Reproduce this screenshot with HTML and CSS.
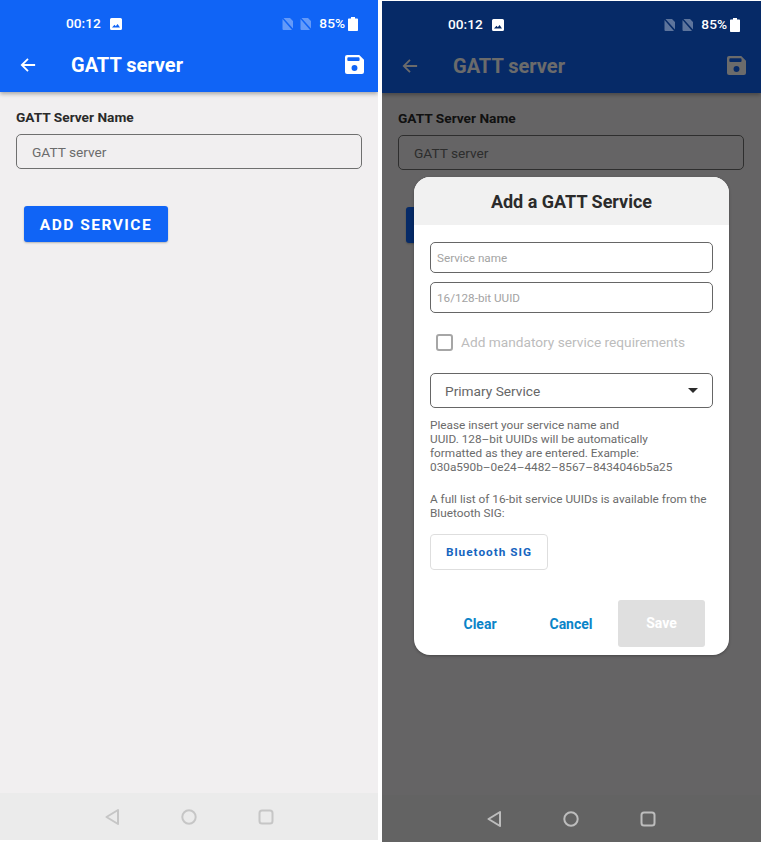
FILE: index.html
```html
<!DOCTYPE html>
<html lang="en">
<head>
<meta charset="utf-8">
<title>GATT server</title>
<link rel="stylesheet" href="styles.css">
</head>
<body>
<svg class="defs" width="0" height="0" aria-hidden="true">
  <symbol id="i-image" viewBox="0 0 12 12"><path fill-rule="evenodd" d="M1.5 0h9A1.5 1.5 0 0 1 12 1.5v9a1.5 1.5 0 0 1-1.500 1.500h-9A1.500 1.500 0 0 1 0 10.500v-9A1.500 1.500 0 0 1 1.500 0zM2 9.500h8L7.600 6 5.800 8.300 4.500 6.800z" fill="currentColor"/></symbol>
  <symbol id="i-sim" viewBox="0 0 12 12"><path d="M1.500 0h6.500L11 3v7.500zM.500 1v10a1 1 0 0 0 1 1h8.500z" fill="currentColor"/></symbol>
  <symbol id="i-batt" viewBox="0 0 10 14"><path d="M3 0h4v1.500h2.200a.8.8 0 0 1 .8.800v10.900a.8.8 0 0 1-.8.800H.8a.8.8 0 0 1-.8-.8V2.300a.8.8 0 0 1 .8-.8H3z" fill="currentColor"/></symbol>
  <symbol id="i-back" viewBox="0 0 18 18"><path d="M17 9H2.500M9 2 2 9l7 7" fill="none" stroke="currentColor" stroke-width="2"/></symbol>
  <symbol id="i-save" viewBox="0 0 18 18"><path fill-rule="evenodd" d="M2 0h11.500L18 4.500V16a2 2 0 0 1-2 2H2a2 2 0 0 1-2-2V2a2 2 0 0 1 2-2zm1.200 2.200a1 1 0 0 0-1 1v1.600a1 1 0 0 0 1 1h9.600a1 1 0 0 0 1-1V3.200a1 1 0 0 0-1-1zM9 9.500a2.800 2.800 0 1 0 0 5.600 2.800 2.800 0 0 0 0-5.600z" fill="currentColor"/></symbol>
  <symbol id="i-nav-back" viewBox="0 0 16 18"><path d="M14 2 2.500 9 14 16z" fill="none" stroke="currentColor" stroke-width="2" stroke-linejoin="round"/></symbol>
  <symbol id="i-nav-home" viewBox="0 0 16 16"><circle cx="8" cy="8" r="6.700" fill="none" stroke="currentColor" stroke-width="2"/></symbol>
  <symbol id="i-nav-recent" viewBox="0 0 16 16"><rect x="1.500" y="1.500" width="13" height="13" rx="2.500" fill="none" stroke="currentColor" stroke-width="2"/></symbol>
</svg>

<div class="screens">
  <section class="screen">
    <header class="appbar">
      <div class="status">
        <span class="clock">00:12</span>
        <svg class="ic-image"><use href="#i-image"/></svg>
        <span class="status-gap"></span>
        <svg class="ic-sim"><use href="#i-sim"/></svg>
        <svg class="ic-sim"><use href="#i-sim"/></svg>
        <span class="pct">85%</span>
        <svg class="ic-batt"><use href="#i-batt"/></svg>
      </div>
      <div class="toolbar">
        <svg class="ic-back"><use href="#i-back"/></svg>
        <h1 class="title">GATT server</h1>
        <svg class="ic-save"><use href="#i-save"/></svg>
      </div>
    </header>
    <main class="content">
      <div class="label">GATT Server Name</div>
      <div class="name-field">GATT server</div>
      <div class="add-button">ADD SERVICE</div>
    </main>
    <nav class="navbar">
      <svg class="ic-nav-back"><use href="#i-nav-back"/></svg>
      <svg class="ic-nav"><use href="#i-nav-home"/></svg>
      <svg class="ic-nav"><use href="#i-nav-recent"/></svg>
    </nav>
  </section>

  <section class="screen screen-dimmed">
    <header class="appbar">
      <div class="status">
        <span class="clock">00:12</span>
        <svg class="ic-image"><use href="#i-image"/></svg>
        <span class="status-gap"></span>
        <svg class="ic-sim"><use href="#i-sim"/></svg>
        <svg class="ic-sim"><use href="#i-sim"/></svg>
        <span class="pct">85%</span>
        <svg class="ic-batt"><use href="#i-batt"/></svg>
      </div>
      <div class="toolbar">
        <svg class="ic-back"><use href="#i-back"/></svg>
        <h1 class="title">GATT server</h1>
        <svg class="ic-save"><use href="#i-save"/></svg>
      </div>
    </header>
    <main class="content">
      <div class="label">GATT Server Name</div>
      <div class="name-field">GATT server</div>
      <div class="add-button">ADD SERVICE</div>
    </main>
    <nav class="navbar">
      <svg class="ic-nav-back"><use href="#i-nav-back"/></svg>
      <svg class="ic-nav"><use href="#i-nav-home"/></svg>
      <svg class="ic-nav"><use href="#i-nav-recent"/></svg>
    </nav>
    <div class="scrim"></div>
    <div class="dialog">
      <div class="dialog-head">Add a GATT Service</div>
      <div class="dialog-body">
        <div class="field">Service name</div>
        <div class="field field-next">16/128-bit UUID</div>
        <div class="check-row">
          <span class="checkbox"></span>
          <span class="check-label">Add mandatory service requirements</span>
        </div>
        <div class="select">
          <span>Primary Service</span>
          <span class="caret"></span>
        </div>
        <p class="help help-first">Please insert your service name and<br>UUID. 128–bit UUIDs will be automatically<br>formatted as they are entered. Example:<br>030a590b–0e24–4482–8567–8434046b5a25</p>
        <p class="help help-second">A full list of 16-bit service UUIDs is available from the Bluetooth SIG:</p>
        <div class="sig-button">Bluetooth SIG</div>
        <div class="actions">
          <span class="action action-clear">Clear</span>
          <span class="action action-cancel">Cancel</span>
          <span class="action-save">Save</span>
        </div>
      </div>
    </div>
  </section>
</div>
</body>
</html>
```
FILE: styles.css
```css
* { box-sizing: border-box; }

html, body {
  margin: 0;
  padding: 0;
  height: 100%;
  background: #fff;
  font-family: Roboto, "Liberation Sans", sans-serif;
}

.defs { position: absolute; }

.screens {
  display: flex;
  gap: 4px;
  width: 761px;
  height: 842px;
  overflow: hidden;
}

.screen {
  position: relative;
  width: 378px;
  height: 840px;
  display: flex;
  flex-direction: column;
  background: #f1eff0;
  overflow: hidden;
}

.screen-dimmed {
  width: 379px;
  height: 841px;
  margin-top: 1px;
}

.appbar {
  height: 92px;
  flex: none;
  background: #1064f6;
  color: #fff;
  box-shadow: 0 2px 4px rgba(0, 0, 0, .3);
  position: relative;
}

.status {
  height: 47px;
  padding: 0 20px 0 66px;
  display: flex;
  align-items: center;
  position: relative;
  z-index: 3;
}

.screen-dimmed .status { padding-right: 21px; }

.clock, .pct {
  font-size: 13.7px;
  font-weight: 500;
  line-height: 47px;
}

.ic-image {
  width: 12px;
  height: 12px;
  margin-left: 9px;
}

.status-gap { flex: 1; }

.ic-sim {
  width: 12px;
  height: 12px;
  margin-right: 6px;
  opacity: .35;
}

.pct { margin-left: 1px; }

.ic-batt {
  width: 10px;
  height: 14px;
  margin-left: 3px;
}

.toolbar {
  height: 44px;
  margin-top: -4px;
  padding: 0 14px 0 20px;
  display: flex;
  align-items: center;
}

.screen-dimmed .toolbar { padding-right: 15px; }

.ic-back { width: 16px; height: 16px; margin-top: -1px; }
.ic-save { width: 19px; height: 19px; margin-left: auto; margin-top: -1px; }

.title {
  margin: 0 0 0 35px;
  font-size: 20px;
  font-weight: 700;
  line-height: 28px;
}

.content {
  flex: 1;
  padding: 17px 16px 0;
}

.screen-dimmed .content { padding-right: 17px; }

.label {
  font-size: 13.7px;
  font-weight: 700;
  line-height: 16px;
  color: #2a2a2a;
}

.name-field {
  height: 35px;
  margin-top: 9px;
  padding-left: 15px;
  border: 1px solid #6f6f6f;
  border-radius: 5px;
  font-size: 13.7px;
  line-height: 34px;
  color: #6b6b6b;
}

.add-button {
  display: inline-block;
  width: 144px;
  height: 36px;
  margin: 37px 0 0 8px;
  background: #1064f6;
  border-radius: 3px;
  color: #fff;
  font-size: 15.5px;
  font-weight: 700;
  line-height: 38px;
  letter-spacing: 1.5px;
  text-align: center;
  box-shadow: 0 1px 2px rgba(0, 0, 0, .25);
}

.navbar {
  height: 47px;
  flex: none;
  background: #ebebeb;
  color: #c6c6c6;
  display: flex;
  align-items: center;
  padding-left: 104px;
  gap: 61px;
  position: relative;
}

.ic-nav-back { width: 16px; height: 18px; }
.ic-nav { width: 16px; height: 16px; }

.screen-dimmed .navbar { color: #bdbdbd; }
.screen-dimmed .navbar svg { position: relative; z-index: 3; }

.scrim {
  position: absolute;
  inset: 0;
  z-index: 2;
  background: rgba(0, 0, 0, .58);
}

.dialog {
  position: absolute;
  z-index: 4;
  left: 32px;
  top: 176px;
  width: 315px;
  height: 478px;
  background: #fff;
  border-radius: 16px;
  overflow: hidden;
  box-shadow: 0 1px 3px rgba(0, 0, 0, .3);
}

.dialog-head {
  height: 48px;
  background: #f1f1f1;
  color: #2b2b2b;
  font-size: 18px;
  font-weight: 700;
  line-height: 49px;
  text-align: center;
}

.dialog-body {
  padding: 17px 16px 0;
}

.field {
  height: 31px;
  padding-left: 6px;
  border: 1px solid #666;
  border-radius: 5px;
  color: #a3a3a3;
  font-size: 11.7px;
  line-height: 30px;
}

.field-next { margin-top: 9px; }

.check-row {
  display: flex;
  align-items: center;
  height: 60px;
  padding: 0 0 2px 6px;
}

.checkbox {
  width: 17px;
  height: 17px;
  border: 2px solid #a6a6a6;
  border-radius: 3px;
}

.check-label {
  margin-left: 8px;
  color: #bcbcbc;
  font-size: 13.7px;
}

.select {
  height: 35px;
  padding: 0 14px;
  display: flex;
  align-items: center;
  justify-content: space-between;
  border: 1px solid #666;
  border-radius: 5px;
  color: #666;
  font-size: 13.7px;
}

.caret {
  width: 0;
  height: 0;
  border-left: 5px solid transparent;
  border-right: 5px solid transparent;
  border-top: 5px solid #2b2b2b;
}

.help {
  margin: 0;
  color: #6b6b6b;
  font-size: 11.8px;
  line-height: 14px;
}

.help-first { margin-top: 10px; }
.help-second { margin-top: 18px; }

.sig-button {
  width: 118px;
  height: 36px;
  margin-top: 14px;
  border: 1px solid #dedede;
  border-radius: 4px;
  color: #1565c0;
  font-size: 11.8px;
  font-weight: 700;
  line-height: 35px;
  letter-spacing: 1px;
  text-align: center;
}

.actions {
  position: relative;
  display: flex;
  align-items: center;
  height: 47px;
  margin-top: 30px;
}

.action {
  color: #0a84c8;
  font-size: 14px;
  font-weight: 700;
  text-align: center;
}

.action-clear { width: 100px; }
.action-cancel { width: 82px; }

.action-save {
  width: 87px;
  height: 47px;
  margin-left: 6px;
  background: #dfdfdf;
  border-radius: 3px;
  color: #fff;
  font-size: 14px;
  font-weight: 700;
  line-height: 47px;
  text-align: center;
}
```
